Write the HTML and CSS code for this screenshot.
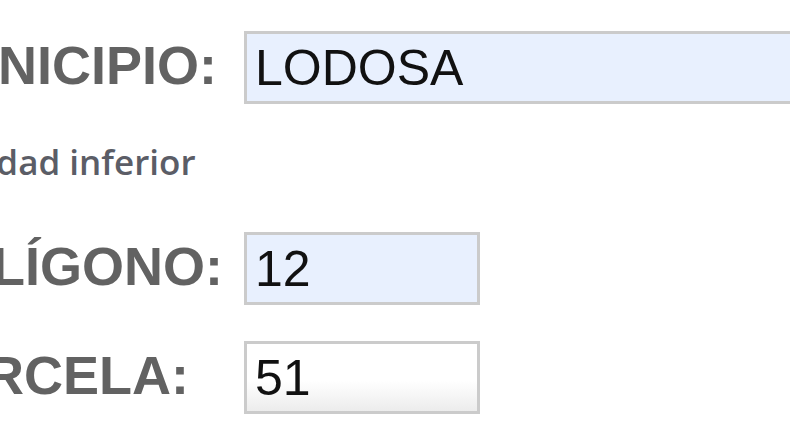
FILE: index.html
```html
<!DOCTYPE html>
<html lang="es">
<head>
    <meta charset="UTF-8">
    <title>Consulta de parcela</title>
    <link rel="stylesheet" href="styles.css">
</head>
<body>
    <form class="search-form">
        <div class="row">
            <label for="municipio">MUNICIPIO:</label>
            <input type="text" id="municipio" class="field field-wide autofilled" value="LODOSA">
        </div>

        <p class="hint">Entidad inferior</p>

        <div class="row row-poligono">
            <label for="poligono">POLÍGONO:</label>
            <input type="text" id="poligono" class="field autofilled" value="12">
        </div>

        <div class="row row-parcela">
            <label for="parcela">PARCELA:</label>
            <input type="text" id="parcela" class="field" value="51">
        </div>
    </form>
</body>
</html>
```

FILE: styles.css
```css
html, body {
    margin: 0;
    padding: 0;
    background: #fff;
    overflow: hidden;
}
body {
    width: 790px;
    height: 440px;
}
.search-form {
    margin-left: -86px;
    padding-top: 31px;
}
.row {
    display: flex;
    align-items: center;
}
.row label {
    width: 330px;
    flex: none;
    font-family: "Liberation Sans", Arial, sans-serif;
    font-weight: bold;
    font-size: 54px;
    line-height: 73px;
    color: #626262;
    position: relative;
    top: -2px;
}
.field {
    box-sizing: border-box;
    height: 73px;
    width: 236px;
    margin: 0;
    padding: 0 8px;
    border: 3px solid #cbcbcb;
    border-radius: 0;
    font-family: "Liberation Sans", Arial, sans-serif;
    font-size: 50px;
    color: #111;
    background: linear-gradient(#fff 55%, #ececec);
    outline: none;
}
.field-wide {
    width: 640px;
}
.autofilled {
    background: #e8f0fe;
}
.hint {
    margin: 40px 0 0 17px;
    font-family: "Open Sans", sans-serif;
    font-weight: 600;
    font-size: 35px;
    line-height: 36px;
    color: #5b5d66;
}
.row-poligono {
    margin-top: 52px;
}
.row-parcela {
    margin-top: 36px;
}
```
